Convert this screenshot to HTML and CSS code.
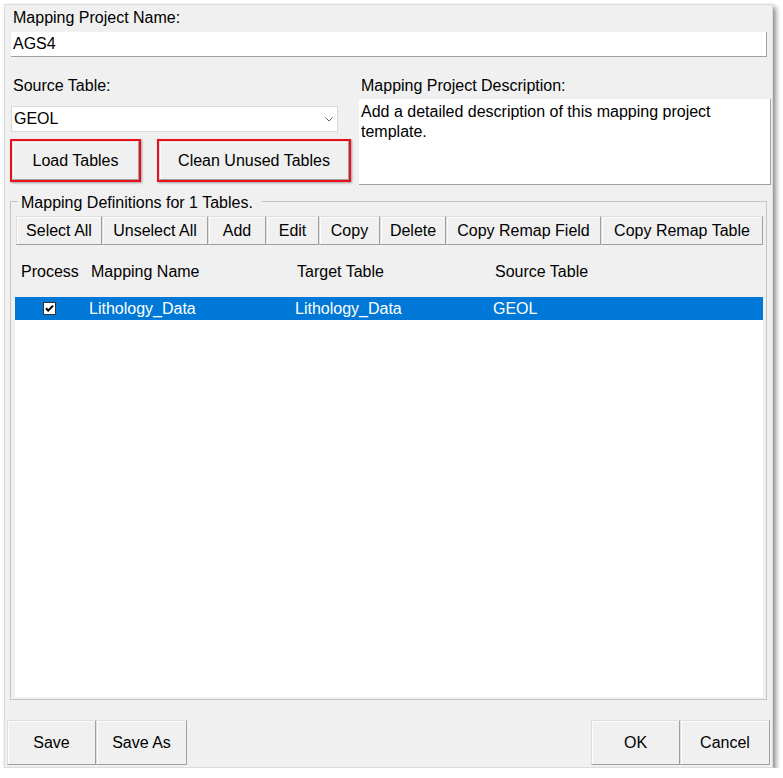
FILE: index.html
```html
<!DOCTYPE html>
<html>
<head>
<meta charset="utf-8">
<link rel="stylesheet" href="styles.css">
</head>
<body>
<div class="window">
  <div class="label name-label">Mapping Project Name:</div>
  <div class="name-input">AGS4</div>
  <div class="row2">
    <div class="left">
      <div class="label">Source Table:</div>
      <div class="select">
        <span>GEOL</span>
        <svg class="chev" width="8" height="5" viewBox="0 0 8 5"><path d="M0.5 0.5 L4 4 L7.5 0.5" fill="none" stroke="#606060" stroke-width="1"/></svg>
      </div>
      <div class="btnrow">
        <div class="hl hl-load"><div class="btn">Load Tables</div></div>
        <div class="hl hl-clean"><div class="btn">Clean Unused Tables</div></div>
      </div>
    </div>
    <div class="right">
      <div class="label">Mapping Project Description:</div>
      <div class="desc">Add a detailed description of this mapping project template.</div>
    </div>
  </div>
  <fieldset class="group">
    <legend>Mapping Definitions for 1 Tables.</legend>
    <div class="toolbar">
      <div class="btn tb w-selall">Select All</div>
      <div class="btn tb w-unsel">Unselect All</div>
      <div class="btn tb w-add">Add</div>
      <div class="btn tb w-edit">Edit</div>
      <div class="btn tb w-copy">Copy</div>
      <div class="btn tb w-del">Delete</div>
      <div class="btn tb w-crf">Copy Remap Field</div>
      <div class="btn tb w-crt">Copy Remap Table</div>
    </div>
    <div class="header">
      <div class="hc c1">Process</div>
      <div class="hc">Mapping Name</div>
      <div class="hc">Target Table</div>
      <div class="hc">Source Table</div>
    </div>
    <div class="list">
      <div class="row sel">
        <div class="rc c1">
          <svg class="cb" width="13" height="13" viewBox="0 0 13 13"><rect x="0.5" y="0.5" width="12" height="12" fill="#fff" stroke="#333"/><path d="M3 6.2 L5.2 8.6 L10 3.6" fill="none" stroke="#000" stroke-width="2"/></svg>
        </div>
        <div class="rc">Lithology_Data</div>
        <div class="rc">Lithology_Data</div>
        <div class="rc">GEOL</div>
      </div>
    </div>
  </fieldset>
  <div class="footer">
    <div class="fgroup">
      <div class="btn fb w-save">Save</div>
      <div class="btn fb w-saveas">Save As</div>
    </div>
    <div class="fgroup">
      <div class="btn fb w-ok">OK</div>
      <div class="btn fb w-cancel">Cancel</div>
    </div>
  </div>
</div>
</body>
</html>
```
FILE: styles.css
```css
* { box-sizing: border-box; }
body {
  margin: 0;
  background: #fff;
  font-family: "Liberation Sans", Arial, sans-serif;
  font-size: 16px;
  color: #000;
}
.window {
  margin: 4px 0 0 4px;
  width: 769px;
  height: 764px;
  background: #f0f0f0;
  border: 1px solid #dcdcdc;
  box-shadow: 3px 3px 5px rgba(0,0,0,0.45);
  display: flex;
  flex-direction: column;
}
.label { line-height: 19px; white-space: nowrap; }
.name-label { margin-top: 3px; padding-left: 8px; }
.name-input {
  margin: 5px 0 0 6px;
  width: 756px;
  height: 25px;
  background: #fff;
  border-right: 1px solid #a0a0a0;
  border-bottom: 1px solid #a0a0a0;
  line-height: 24px;
  padding-left: 2px;
}
.row2 { display: flex; gap: 8px; margin: 19px 0 0 5px; }
.left { width: 341px; }
.left .label { padding-left: 3px; }
.select {
  margin: 11px 0 0 1px;
  width: 327px;
  height: 26px;
  background: #fff;
  border: 1px solid #d9d9d9;
  display: flex;
  align-items: center;
  justify-content: space-between;
  padding: 0 4px 0 2px;
  line-height: 24px;
}
.chev { display: block; margin-top: 1px; }
.btnrow { display: flex; gap: 16px; margin-top: 7px; }
.hl {
  height: 43px;
  border: 2px solid #e8101a;
  box-shadow: 1px 1px 2px rgba(0,0,0,0.35);
}
.hl-load { width: 131px; }
.hl-clean { width: 194px; }
.hl .btn { width: 100%; height: 100%; }
.btn {
  display: flex;
  align-items: center;
  justify-content: center;
  background: #f0f0f0;
  border: 1px solid;
  border-color: #dedede #a0a0a0 #a0a0a0 #dedede;
  box-shadow: inset 1px 1px 0 #fcfcfc;
  white-space: nowrap;
}
.right { width: 412px; }
.right .label { padding-left: 2px; }
.desc {
  margin-top: 4px;
  height: 86px;
  background: #fff;
  border-right: 1px solid #a0a0a0;
  border-bottom: 1px solid #a0a0a0;
  padding: 3px 4px 0 2px;
  line-height: 20px;
}
.group {
  margin: 5px 0 0 5px;
  width: 757px;
  min-width: 0;
  border: 1px solid #c4c4c4;
  padding: 0 3px 2px 4px;
}
.group legend {
  margin-left: 3px;
  padding: 3px 9px 0 3px;
  line-height: 19px;
  white-space: nowrap;
}
.toolbar { display: flex; height: 29px; margin: 4px 0 0 1px; }
.tb { height: 29px; }
.w-selall { width: 86px; }
.w-unsel { width: 106px; }
.w-add { width: 58px; }
.w-edit { width: 53px; }
.w-copy { width: 61px; }
.w-del { width: 66px; }
.w-crf { width: 155px; }
.w-crt { width: 162px; }
.header, .row {
  display: grid;
  grid-template-columns: 72px 206px 198px 1fr;
}
.header { height: 52px; padding-top: 17px; line-height: 19px; }
.hc { padding-left: 4px; white-space: nowrap; }
.hc.c1 { padding-left: 6px; }
.list { height: 400px; background: #fff; }
.row { height: 23px; line-height: 23px; }
.row.sel { background: #0078d7; color: #fff; }
.rc { padding-left: 2px; white-space: nowrap; }
.rc.c1 { padding-left: 28px; display: flex; align-items: center; }
.cb { display: block; }
.footer {
  display: flex;
  justify-content: space-between;
  margin: 20px 2px 0 2px;
}
.fgroup { display: flex; }
.fb { height: 45px; }
.w-save { width: 89px; }
.w-saveas { width: 91px; }
.w-ok { width: 89px; }
.w-cancel { width: 90px; }
```
